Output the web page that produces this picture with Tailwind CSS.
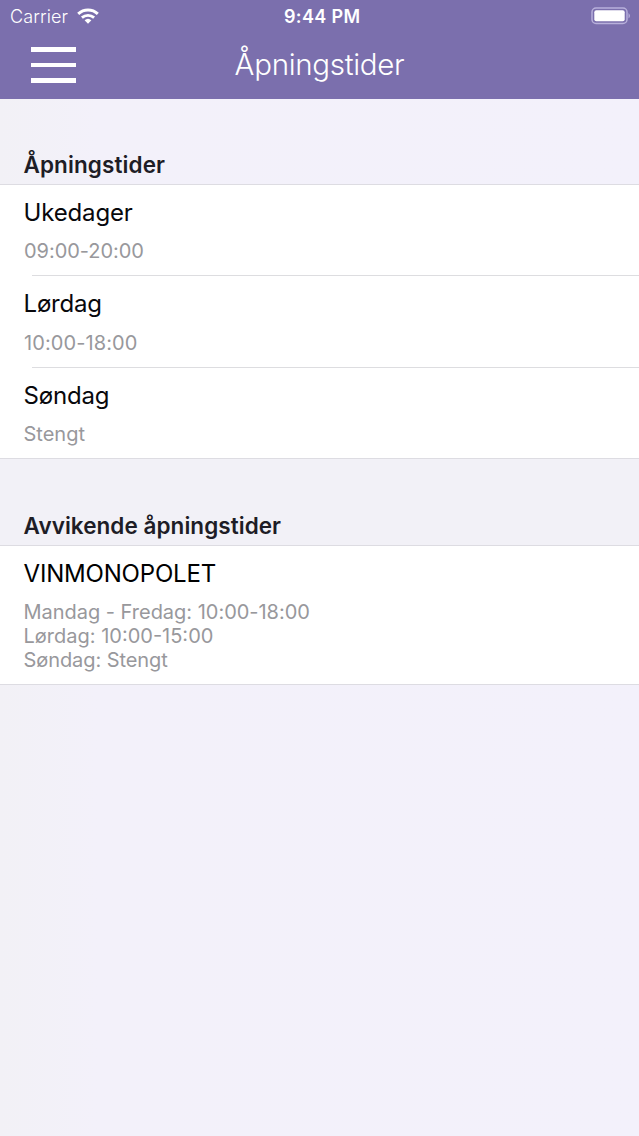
<!DOCTYPE html>
<html lang="no">
<head>
<meta charset="utf-8">
<title>Åpningstider</title>
<script src="https://cdn.jsdelivr.net/npm/@tailwindcss/browser@4"></script>
</head>
<body class="w-[639px] h-[1136px] overflow-hidden bg-[#f3f1fa] font-['Inter','Liberation_Sans',sans-serif] flex flex-col whitespace-nowrap">
<header class="h-[98.5px] shrink-0 bg-[#7b6fad] text-white">
  <div class="h-8 grid grid-cols-[284px_1fr_auto] items-center pl-[10px] pr-2">
    <div class="flex items-center gap-[9px]">
      <span class="text-[18px] leading-8 tracking-[0.1px] font-[350] pt-px">Carrier</span>
      <svg class="w-[22px] h-4 -mt-px" viewBox="0 0 22 16" fill="none" stroke="white" stroke-width="3"><path d="M1.2 5.9C6.8.7 15.2.7 20.8 5.9"/><path d="M4.9 9.6C8.4 6.5 13.6 6.5 17.1 9.6" stroke-width="2.8"/><path d="M7.6 12.3Q11 9.2 14.4 12.3L11 15.7Z" fill="white" stroke="none"/></svg>
    </div>
    <span class="text-[18px] leading-8 font-semibold tracking-[0.35px] -ml-[10px] pt-px">9:44 PM</span>
    <svg class="w-[40px] h-[18px] -mt-px" viewBox="0 0 40 18"><rect x="1" y="1" width="35" height="15.5" rx="4" fill="none" stroke="#b8b0db" stroke-width="1.5"/><rect x="3.3" y="3.3" width="30.4" height="11" rx="2" fill="white"/><path d="M37.5 6q3 2.8 0 5.6z" fill="#b8b0db"/></svg>
  </div>
  <div class="h-[66px] grid grid-cols-[1fr_auto_1fr] items-center px-[31px]">
    <div class="w-[45px] flex flex-col gap-[11px]"><i class="block h-[5px] bg-white"></i><i class="block h-[4.5px] bg-white"></i><i class="block h-[5px] bg-white"></i></div>
    <h1 class="text-[29.5px] leading-[60px] font-[350] tracking-[-0.3px] pb-[2px]"><span>Åpningstider</span></h1>
  </div>
</header>
<main class="flex-1 bg-linear-to-r from-[#f2f1f6] from-0% via-[#f3f1fa] via-15% to-[#f3f1fb]">
  <h2 class="h-[86px] border-b border-[#dddce2] pl-[23.5px] pt-[50.5px] leading-[32px] text-[22.5px] font-semibold text-[#1e1d26] tracking-[0.1px]"><span>Åpningstider</span></h2>
  <section class="bg-white h-[274px] border-b border-[#dddce2] text-[#08080c]">
    <div class="h-[90px] flex flex-col pl-[23.5px] pt-3">
      <span class="text-[24px] leading-8 tracking-[-0.15px]">Ukedager</span>
      <span class="text-[20px] leading-6 mt-[10px] pl-[0.5px] text-[#98989c] tracking-[-0.05px]">09:00-20:00</span>
    </div>
    <div class="h-px ml-8 bg-[#dddde0]"></div>
    <div class="h-[91px] flex flex-col pl-[23.5px] pt-3">
      <span class="text-[24px] leading-8 tracking-[-0.18px]">Lørdag</span>
      <span class="text-[20px] leading-6 mt-[11px] pl-[0.5px] text-[#98989c] tracking-[0.1px]">10:00-18:00</span>
    </div>
    <div class="h-px ml-8 bg-[#dddde0]"></div>
    <div class="flex flex-col pl-[23.5px] pt-3">
      <span class="text-[24px] leading-8 tracking-[-0.18px]">Søndag</span>
      <span class="text-[20px] leading-6 mt-[10px] text-[#98989c]">Stengt</span>
    </div>
  </section>
  <h2 class="h-[87px] bg-[#f2f1f7] border-b border-[#dddce2] pl-[23.5px] pt-[51.5px] leading-[32px] text-[22.5px] font-semibold text-[#1e1d26] tracking-[0.05px]"><span>Avvikende åpningstider</span></h2>
  <section class="bg-white h-[139px] border-b border-[#dddce2] flex flex-col pl-[23.5px] pt-3 text-black">
    <span class="text-[24px] leading-8 tracking-[-0.18px]">VINMONOPOLET</span>
    <div class="text-[20px] leading-6 mt-[10px] text-[#98989c]">
      <p class="tracking-[-0.02px]"><span>Mandag - Fredag: 10:00-18:00</span></p>
      <p><span>Lørdag: 10:00-15:00</span></p>
      <p class="tracking-[-0.08px]"><span>Søndag: Stengt</span></p>
    </div>
  </section>
</main>
</body>
</html>
